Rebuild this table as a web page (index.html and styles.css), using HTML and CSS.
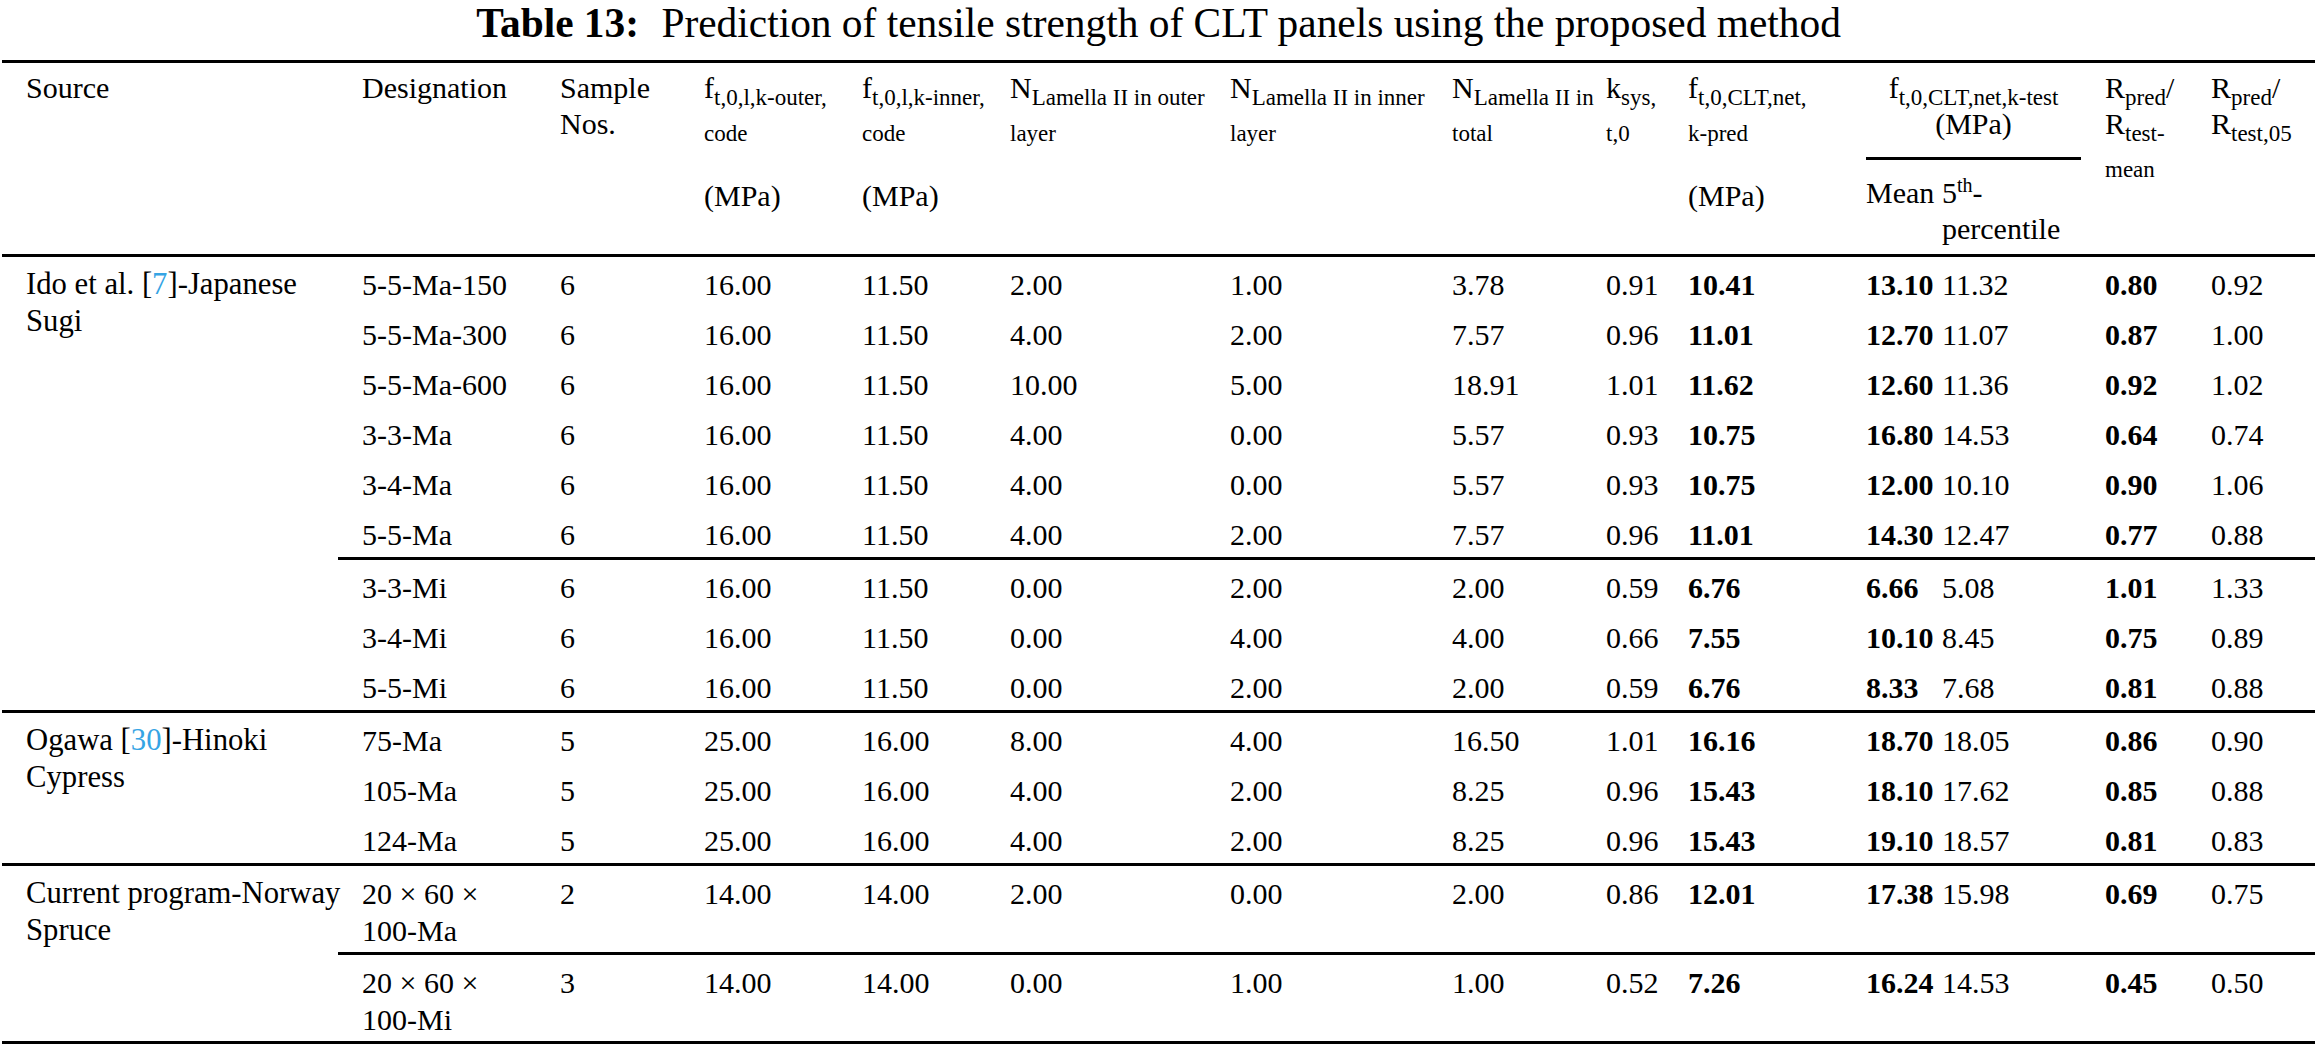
FILE: index.html
```html
<!DOCTYPE html>
<html lang="en">
<head>
<meta charset="utf-8">
<title>Table 13</title>
<link rel="stylesheet" href="styles.css">
</head>
<body>
<div class="caption"><b>Table 13:</b><span class="gap"></span> Prediction of tensile strength of CLT panels using the proposed method</div>
<table class="tbl">
  <colgroup>
    <col class="c1"><col class="c2"><col class="c3"><col class="c4"><col class="c5"><col class="c6"><col class="c7">
    <col class="c8"><col class="c9"><col class="c10"><col class="c11"><col class="c12"><col class="c13"><col class="c14">
  </colgroup>
  <thead>
    <tr class="h1">
      <th rowspan="2" class="hd"><div class="ln">Source</div></th>
      <th rowspan="2" class="hd"><div class="ln">Designation</div></th>
      <th rowspan="2" class="hd"><div class="ln">Sample</div><div class="ln">Nos.</div></th>
      <th rowspan="2" class="hd"><div class="ln">f<sub>t,0,l,k-outer,</sub></div><div class="ln"><sub>code</sub></div><div class="ln unit">(MPa)</div></th>
      <th rowspan="2" class="hd"><div class="ln">f<sub>t,0,l,k-inner,</sub></div><div class="ln"><sub>code</sub></div><div class="ln unit">(MPa)</div></th>
      <th rowspan="2" class="hd"><div class="ln">N<sub>Lamella II in outer</sub></div><div class="ln"><sub>layer</sub></div></th>
      <th rowspan="2" class="hd"><div class="ln">N<sub>Lamella II in inner</sub></div><div class="ln"><sub>layer</sub></div></th>
      <th rowspan="2" class="hd"><div class="ln">N<sub>Lamella II in</sub></div><div class="ln"><sub>total</sub></div></th>
      <th rowspan="2" class="hd"><div class="ln">k<sub>sys,</sub></div><div class="ln"><sub>t,0</sub></div></th>
      <th rowspan="2" class="hd"><div class="ln">f<sub>t,0,CLT,net,</sub></div><div class="ln"><sub>k-pred</sub></div><div class="ln unit">(MPa)</div></th>
      <th colspan="2" class="grp"><div class="grp-in"><div class="ln">f<sub>t,0,CLT,net,k-test</sub></div><div class="ln">(MPa)</div></div></th>
      <th rowspan="2" class="hd"><div class="ln">R<sub>pred</sub>/</div><div class="ln">R<sub>test-</sub></div><div class="ln"><sub>mean</sub></div></th>
      <th rowspan="2" class="hd"><div class="ln">R<sub>pred</sub>/</div><div class="ln">R<sub>test,05</sub></div></th>
    </tr>
    <tr class="h2">
      <th class="sub-hd"><div class="ln">Mean</div></th>
      <th class="sub-hd"><div class="ln">5<sup>th</sup>-</div><div class="ln">percentile</div></th>
    </tr>
  </thead>
  <tbody>
    <tr>
      <td rowspan="9" class="rule src">Ido et al. [<span class="ref">7</span>]-Japanese<br>Sugi</td>
      <td>5-5-Ma-150</td><td>6</td><td>16.00</td><td>11.50</td><td>2.00</td><td>1.00</td><td>3.78</td><td>0.91</td><td class="b">10.41</td><td class="b">13.10</td><td>11.32</td><td class="b">0.80</td><td>0.92</td>
    </tr>
    <tr>
      <td>5-5-Ma-300</td><td>6</td><td>16.00</td><td>11.50</td><td>4.00</td><td>2.00</td><td>7.57</td><td>0.96</td><td class="b">11.01</td><td class="b">12.70</td><td>11.07</td><td class="b">0.87</td><td>1.00</td>
    </tr>
    <tr>
      <td>5-5-Ma-600</td><td>6</td><td>16.00</td><td>11.50</td><td>10.00</td><td>5.00</td><td>18.91</td><td>1.01</td><td class="b">11.62</td><td class="b">12.60</td><td>11.36</td><td class="b">0.92</td><td>1.02</td>
    </tr>
    <tr>
      <td>3-3-Ma</td><td>6</td><td>16.00</td><td>11.50</td><td>4.00</td><td>0.00</td><td>5.57</td><td>0.93</td><td class="b">10.75</td><td class="b">16.80</td><td>14.53</td><td class="b">0.64</td><td>0.74</td>
    </tr>
    <tr>
      <td>3-4-Ma</td><td>6</td><td>16.00</td><td>11.50</td><td>4.00</td><td>0.00</td><td>5.57</td><td>0.93</td><td class="b">10.75</td><td class="b">12.00</td><td>10.10</td><td class="b">0.90</td><td>1.06</td>
    </tr>
    <tr class="rule">
      <td>5-5-Ma</td><td>6</td><td>16.00</td><td>11.50</td><td>4.00</td><td>2.00</td><td>7.57</td><td>0.96</td><td class="b">11.01</td><td class="b">14.30</td><td>12.47</td><td class="b">0.77</td><td>0.88</td>
    </tr>
    <tr>
      <td>3-3-Mi</td><td>6</td><td>16.00</td><td>11.50</td><td>0.00</td><td>2.00</td><td>2.00</td><td>0.59</td><td class="b">6.76</td><td class="b">6.66</td><td>5.08</td><td class="b">1.01</td><td>1.33</td>
    </tr>
    <tr>
      <td>3-4-Mi</td><td>6</td><td>16.00</td><td>11.50</td><td>0.00</td><td>4.00</td><td>4.00</td><td>0.66</td><td class="b">7.55</td><td class="b">10.10</td><td>8.45</td><td class="b">0.75</td><td>0.89</td>
    </tr>
    <tr class="rule">
      <td>5-5-Mi</td><td>6</td><td>16.00</td><td>11.50</td><td>0.00</td><td>2.00</td><td>2.00</td><td>0.59</td><td class="b">6.76</td><td class="b">8.33</td><td>7.68</td><td class="b">0.81</td><td>0.88</td>
    </tr>
    <tr>
      <td rowspan="3" class="rule src">Ogawa [<span class="ref">30</span>]-Hinoki<br>Cypress</td>
      <td>75-Ma</td><td>5</td><td>25.00</td><td>16.00</td><td>8.00</td><td>4.00</td><td>16.50</td><td>1.01</td><td class="b">16.16</td><td class="b">18.70</td><td>18.05</td><td class="b">0.86</td><td>0.90</td>
    </tr>
    <tr>
      <td>105-Ma</td><td>5</td><td>25.00</td><td>16.00</td><td>4.00</td><td>2.00</td><td>8.25</td><td>0.96</td><td class="b">15.43</td><td class="b">18.10</td><td>17.62</td><td class="b">0.85</td><td>0.88</td>
    </tr>
    <tr class="rule">
      <td>124-Ma</td><td>5</td><td>25.00</td><td>16.00</td><td>4.00</td><td>2.00</td><td>8.25</td><td>0.96</td><td class="b">15.43</td><td class="b">19.10</td><td>18.57</td><td class="b">0.81</td><td>0.83</td>
    </tr>
    <tr class="rule dbl">
      <td rowspan="2" class="rule src">Current program-Norway<br>Spruce</td>
      <td>20 × 60 ×<br>100-Ma</td><td>2</td><td>14.00</td><td>14.00</td><td>2.00</td><td>0.00</td><td>2.00</td><td>0.86</td><td class="b">12.01</td><td class="b">17.38</td><td>15.98</td><td class="b">0.69</td><td>0.75</td>
    </tr>
    <tr class="rule dbl">
      <td>20 × 60 ×<br>100-Mi</td><td>3</td><td>14.00</td><td>14.00</td><td>0.00</td><td>1.00</td><td>1.00</td><td>0.52</td><td class="b">7.26</td><td class="b">16.24</td><td>14.53</td><td class="b">0.45</td><td>0.50</td>
    </tr>
  </tbody>
</table>
</body>
</html>
```

FILE: styles.css
```css
html, body {
  margin: 0;
  padding: 0;
  background: #ffffff;
}

body {
  color: #000000;
  font-family: "Liberation Serif", "Times New Roman", serif;
  font-size: 30px;
}

.caption {
  height: 60px;
  font-size: 41.4px;
  line-height: 46px;
  text-align: center;
}

.caption .gap {
  display: inline-block;
  width: 12px;
}

.tbl {
  border-collapse: separate;
  border-spacing: 0;
  table-layout: fixed;
  width: 2313px;
  margin-left: 2px;
}

.c1 { width: 336px; }
.c2 { width: 198px; }
.c3 { width: 144px; }
.c4 { width: 158px; }
.c5 { width: 148px; }
.c6 { width: 220px; }
.c7 { width: 222px; }
.c8 { width: 154px; }
.c9 { width: 82px; }
.c10 { width: 178px; }
.c11 { width: 76px; }
.c12 { width: 163px; }
.c13 { width: 106px; }
.c14 { width: 128px; }

th {
  font-weight: normal;
  text-align: left;
  vertical-align: top;
  white-space: nowrap;
  line-height: 36px;
  padding: 0 0 0 24px;
}

.ln {
  height: 36px;
}

sub, sup {
  font-size: 23px;
  line-height: 0;
}

sup {
  font-size: 20px;
}

.h1 th {
  border-top: 3px solid #000;
}

.hd {
  padding-top: 7px;
  border-bottom: 3px solid #000;
}

.hd .unit {
  margin-top: 36px;
}

.grp {
  padding-top: 7px;
}

.grp-in {
  text-align: center;
  padding-bottom: 15px;
  border-bottom: 3px solid #000;
}

.sub-hd {
  padding-top: 15px;
  padding-bottom: 7px;
  border-bottom: 3px solid #000;
}

td {
  text-align: left;
  vertical-align: top;
  white-space: nowrap;
  line-height: 37px;
  padding: 9px 0 4px 24px;
}

td.src {
  font-size: 30.7px;
}

.dbl td {
  padding-bottom: 3px;
}

.rule td,
td.rule {
  border-bottom: 3px solid #000;
}

.b {
  font-weight: bold;
}

.ref {
  color: #35a4e4;
}
```
